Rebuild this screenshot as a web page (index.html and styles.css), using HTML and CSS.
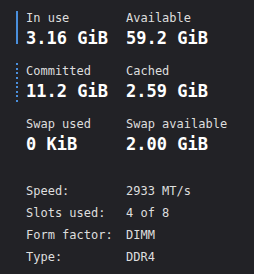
FILE: index.html
```html
<!DOCTYPE html>
<html>
<head>
<meta charset="utf-8">
<link rel="stylesheet" href="styles.css">
</head>
<body>
<div class="panel">
  <div class="group">
    <div class="bar solid"></div>
    <div class="stats">
      <div class="stat"><div class="label">In use</div><div class="value">3.16 GiB</div></div>
      <div class="stat"><div class="label">Available</div><div class="value">59.2 GiB</div></div>
    </div>
  </div>
  <div class="group">
    <div class="bar dotted"><span></span><span></span><span></span><span></span><span></span><span></span><span></span><span></span><span></span></div>
    <div class="stats">
      <div class="stat"><div class="label">Committed</div><div class="value">11.2 GiB</div></div>
      <div class="stat"><div class="label">Cached</div><div class="value">2.59 GiB</div></div>
    </div>
  </div>
  <div class="group">
    <div class="bar none"></div>
    <div class="stats">
      <div class="stat"><div class="label">Swap used</div><div class="value">0 KiB</div></div>
      <div class="stat"><div class="label">Swap available</div><div class="value">2.00 GiB</div></div>
    </div>
  </div>
  <div class="specs">
    <div class="spec">Speed:</div><div class="spec">2933 MT/s</div>
    <div class="spec">Slots used:</div><div class="spec">4 of 8</div>
    <div class="spec">Form factor:</div><div class="spec">DIMM</div>
    <div class="spec">Type:</div><div class="spec">DDR4</div>
  </div>
</div>
</body>
</html>
```
FILE: styles.css
```css
html, body {
  margin: 0;
  padding: 0;
  background: #222226;
  width: 254px;
  height: 274px;
  overflow: hidden;
}
.panel {
  padding: 11px 0 0 16px;
  font-family: "DejaVu Sans Mono", monospace;
  color: #dedede;
  display: flex;
  flex-direction: column;
  gap: 16px;
}
.group {
  display: flex;
  align-items: flex-start;
  gap: 8px;
  height: 37px;
}
.bar {
  width: 2px;
  flex: none;
}
.bar.solid {
  height: 33px;
  background: #4a8fdc;
}
.bar.dotted {
  height: 39px;
  margin-top: -1px;
  display: flex;
  flex-direction: column;
  justify-content: space-between;
}
.bar.dotted span {
  display: block;
  width: 2px;
  height: 2px;
  background: #4a8fdc;
}
.stats {
  display: grid;
  grid-template-columns: 100px 100px;
}
.label {
  font-size: 12px;
  line-height: 14px;
  margin-bottom: 3px;
  white-space: nowrap;
}
.value {
  font-size: 17px;
  line-height: 20px;
  font-weight: bold;
  color: #ffffff;
  white-space: nowrap;
}
.specs {
  margin-top: 10px;
  padding-left: 10px;
  display: grid;
  grid-template-columns: 100px 100px;
  font-size: 12px;
  line-height: 22px;
}
.spec {
  white-space: nowrap;
}
```
